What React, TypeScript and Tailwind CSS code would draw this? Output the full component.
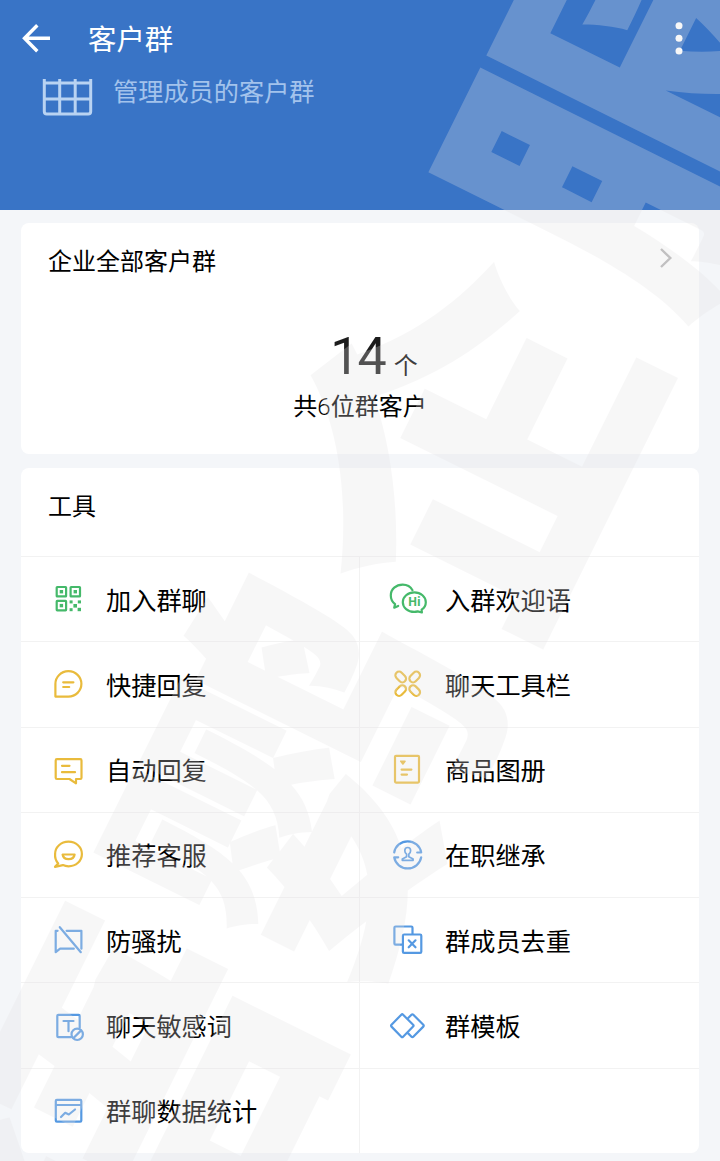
import React from 'react';

type Tool = { label: string; icon: React.ReactNode };

const GREEN = '#45b96a';
const YELLOW = '#e9bb3c';
const BLUE = '#5599e2';

function Icon({ color, children }: { color: string; children: React.ReactNode }) {
  return (
    <svg
      width="40"
      height="40"
      viewBox="0 0 40 40"
      fill="none"
      stroke={color}
      strokeWidth="2.2"
      strokeLinecap="round"
      strokeLinejoin="round"
      className="shrink-0 overflow-visible"
    >
      {children}
    </svg>
  );
}

const tools: Tool[] = [
  {
    label: '加入群聊',
    icon: (
      <Icon color={GREEN}>
        <rect x="8.7" y="8" width="9.4" height="9.4" rx="0.5" />
        <rect x="22.6" y="8" width="9.4" height="9.4" rx="0.5" />
        <rect x="8.7" y="21.9" width="9.4" height="9.4" rx="0.5" />
        <g fill={GREEN} stroke="none">
          <rect x="11.7" y="11" width="3.4" height="3.4" />
          <rect x="25.6" y="11" width="3.4" height="3.4" />
          <rect x="11.7" y="24.9" width="3.4" height="3.4" />
          <rect x="21.6" y="21.4" width="3" height="3" />
          <rect x="29.8" y="21.4" width="3.2" height="3" />
          <rect x="25.4" y="25" width="3.6" height="3.6" />
          <rect x="21.6" y="29.2" width="3" height="3" />
          <rect x="29.6" y="28.8" width="3.4" height="3.4" />
        </g>
      </Icon>
    ),
  },
  {
    label: '入群欢迎语',
    icon: (
      <Icon color={GREEN}>
        <path d="M25.5 11.2C23.6 7.7 19.8 5.6 15.7 5.6 9 5.6 3.8 10.2 3.8 16.4c0 3.8 1.7 6.7 4.3 8.7l-.9 3.6 4-1.8" />
        <path d="M34.6 30.7l.3 2.8-4.2-1.1c-1.1.3-2.2.5-3.4.5-6.5 0-11.5-4.3-11.5-9.7s5-9.8 11.5-9.8 11.5 4.4 11.5 9.8c0 3-1.6 5.8-4.2 7.5z" />
        <text
          x="27.3"
          y="27.4"
          textAnchor="middle"
          fill={GREEN}
          stroke="none"
          className="font-['Open_Sans',sans-serif] text-[12px] font-bold"
        >
          Hi
        </text>
      </Icon>
    ),
  },
  {
    label: '快捷回复',
    icon: (
      <Icon color={YELLOW}>
        <path d="M7.4 32.6V20a13 12.7 0 1 1 13 12.6z" />
        <path d="M15.2 18.3h10.2M15.2 23h6" />
      </Icon>
    ),
  },
  {
    label: '聊天工具栏',
    icon: (
      <Icon color={YELLOW}>
        <rect x="7.7" y="9.3" width="12" height="7.4" rx="3.7" transform="rotate(45 13.7 13)" />
        <rect x="21.7" y="9.3" width="12" height="7.4" rx="3.7" transform="rotate(-45 27.7 13)" />
        <rect x="7.7" y="22.9" width="12" height="7.4" rx="3.7" transform="rotate(-45 13.7 26.6)" />
        <rect x="21.7" y="22.9" width="12" height="7.4" rx="3.7" transform="rotate(45 27.7 26.6)" />
      </Icon>
    ),
  },
  {
    label: '自动回复',
    icon: (
      <Icon color={YELLOW}>
        <path d="M8.9 9.2h23.4q1.2 0 1.2 1.2V27.8q0 1.2-1.2 1.2H28v4.3L21.5 29H8.9q-1.2 0-1.2-1.2V10.4q0-1.2 1.2-1.2z" />
        <path d="M14 15.8h7.5M14 22.2h13" />
      </Icon>
    ),
  },
  {
    label: '商品图册',
    icon: (
      <Icon color={YELLOW}>
        <rect x="8" y="5.8" width="24" height="26.8" rx="1" />
        <path d="M13.8 11.2h4.2l-2.1 2.8z" fill={YELLOW} strokeWidth="1.6" />
        <path d="M14.6 19.6h9.8M14.6 24.6h5.4" />
      </Icon>
    ),
  },
  {
    label: '推荐客服',
    icon: (
      <Icon color={YELLOW}>
        <path d="M10.2 28.4A12.4 12.4 0 0 1 7.1 19C7.1 12 13 6.7 20.5 6.7S33.9 12 33.9 19 28 31.3 20.5 31.3c-2 0-3.9-.4-5.6-1.2L7 31.8z" />
        <path d="M14.6 19.5h12c-.4 2.9-2.7 4.6-6 4.6s-5.6-1.7-6-4.6z" />
      </Icon>
    ),
  },
  {
    label: '在职继承',
    icon: (
      <Icon color={BLUE}>
        <path d="M7.2 17.5C8.3 11 14 6.3 20.7 6.3S33 11 34.2 17.5h-4M34.2 22.3C33 28.8 27.4 33.4 20.7 33.4S8.3 28.8 7.2 22.3h4" />
        <path
          d="M19.6 19.2c-1.2-1-1.8-2-1.8-3.5 0-1.9 1.2-3.2 2.9-3.2s2.9 1.3 2.9 3.2c0 1.5-.6 2.5-1.8 3.5v2.5l4.3 2.3v1.3H15.3v-1.3l4.3-2.3z"
          strokeWidth="1.7"
        />
      </Icon>
    ),
  },
  {
    label: '防骚扰',
    icon: (
      <Icon color={BLUE}>
        <path d="M9.6 10.8H7.7v21.4l4.4-3.5h13.7M18.6 10.8h14.8v17.9" />
        <path d="M11.8 7.2l21 25" />
      </Icon>
    ),
  },
  {
    label: '群成员去重',
    icon: (
      <Icon color={BLUE}>
        <path d="M15.5 24.6H8.6q-1.2 0-1.2-1.2V7.7q0-1.2 1.2-1.2h15.7q1.2 0 1.2 1.2v6.2" />
        <rect x="15.9" y="14.5" width="18.4" height="18.4" rx="1.2" />
        <path d="M21.7 20.3l6.8 7M28.5 20.3l-6.8 7" />
      </Icon>
    ),
  },
  {
    label: '聊天敏感词',
    icon: (
      <Icon color={BLUE}>
        <path d="M23 31.2H10.3q-1 0-1-1V9.8q0-1 1-1h20.4q1 0 1 1v12" />
        <path d="M15.5 15h10M20.5 15v10.2" />
        <circle cx="29.2" cy="28.3" r="5.7" />
        <path d="M25.5 32l7.4-7.4" />
      </Icon>
    ),
  },
  {
    label: '群模板',
    icon: (
      <Icon color={BLUE}>
        <path d="M14.3 8.7L4.5 18.8q-.9.9 0 1.8l9.8 10.1q.9.9 1.8 0l10-10.1q.9-.9 0-1.8l-10-10.1q-.9-.9-1.8 0z" />
        <path d="M21.2 12l3.3-3.3q.9-.9 1.8 0l10 10.1q.9.9 0 1.8l-10 10.1q-.9.9-1.8 0l-3.3-3.3" />
      </Icon>
    ),
  },
  {
    label: '群聊数据统计',
    icon: (
      <Icon color={BLUE}>
        <rect x="7.8" y="8.9" width="25.5" height="21.8" rx="1" />
        <path d="M8 14h25" />
        <path d="M13 26l4.2-4.2 3.6 1.7 6.2-5" />
      </Icon>
    ),
  },
];

function Header() {
  return (
    <header className="h-[210px] bg-[#3974c6]">
      <div className="flex h-[78px] items-center pl-[22px] pr-[36px] text-white">
        <svg width="30" height="30" viewBox="0 0 30 30" fill="none" stroke="currentColor" strokeWidth="3.4" className="-mt-[3px]">
          <path d="M28 15.3H2.5M15.3 2.3L2.5 15.3l12.8 13" />
        </svg>
        <h1 className="ml-[36px] pt-[4px] text-[28.4px] leading-none">客户群</h1>
        <svg width="10" height="34" viewBox="0 0 10 34" fill="currentColor" className="ml-auto -mt-[3px]">
          <circle cx="5" cy="4.8" r="3.5" />
          <circle cx="5" cy="17.3" r="3.5" />
          <circle cx="5" cy="29.9" r="3.5" />
        </svg>
      </div>
      <div className="flex items-start pl-[42px]">
        <svg width="51" height="38" viewBox="0 0 51 38" fill="none" stroke="#b9d3f2" strokeWidth="3" className="mt-px">
          <path d="M2.3 0v32.5q0 2.5 2.5 2.5h41.4q2.5 0 2.5-2.5V0M17.7 0v35M33.2 0v35M2.3 4h46.4M2.3 20h46.4" />
        </svg>
        <p className="ml-5 mt-[2px] text-[25.2px] leading-none text-[#a3c3ec]">管理成员的客户群</p>
      </div>
    </header>
  );
}

export default function App() {
  return (
    <main className="relative h-[1161px] w-[720px] overflow-hidden bg-[#f4f6f9] font-[Roboto,'Noto_Sans_CJK_SC',sans-serif] text-black">
      <Header />

      <section className="mx-[21px] mt-[13px] h-[231px] rounded-[8px] bg-white">
        <div className="flex items-center justify-between pl-[27px] pr-[26px] pt-[27px]">
          <h2 className="text-2xl leading-none">企业全部客户群</h2>
          <svg width="14" height="22" viewBox="0 0 14 22" fill="none" stroke="#b4b4b4" strokeWidth="2.4" className="-mt-2">
            <path d="M2 2l9.3 9L2 20" />
          </svg>
        </div>
        <div className="mt-[55px] flex items-baseline justify-center pl-[28px] leading-none">
          <span className="text-[52px] leading-[56px] tracking-[-2px] text-[#1c1c1c]">14</span>
          <span className="ml-[9px] text-2xl leading-none">个</span>
        </div>
        <p className="mt-[10px] text-center text-2xl leading-none">
          共<span className="font-light">6</span>位群客户
        </p>
      </section>

      <section className="mx-[21px] mt-[14px] rounded-[8px] bg-white">
        <h2 className="h-[88px] pl-[27px] pt-[27px] text-2xl leading-none">工具</h2>
        <div className="grid grid-cols-2">
          {tools.map((tool, i) => (
            <div
              key={tool.label}
              className={`flex h-[85.3px] items-center gap-[18px] border-t border-[#f2f2f2] pl-[27px] ${
                i % 2 === 0 ? 'border-r' : ''
              }`}
            >
              {tool.icon}
              <span className="pt-[4px] text-[25.2px] leading-none">{tool.label}</span>
            </div>
          ))}
          <div className="border-t border-[#f2f2f2]" />
        </div>
      </section>

      {/* Diagonal watermark over the whole page */}
      <div className="pointer-events-none absolute left-[372px] top-[593px] h-0 w-0 select-none">
        <div className="absolute left-0 top-0 -translate-x-1/2 -translate-y-1/2 -rotate-[63.6deg] whitespace-nowrap font-['Noto_Sans_CJK_SC',sans-serif] text-[354px] font-black leading-none tracking-[19px] text-[#e4e2e4] opacity-[0.27]">
          语鹦企服
        </div>
      </div>
    </main>
  );
}
